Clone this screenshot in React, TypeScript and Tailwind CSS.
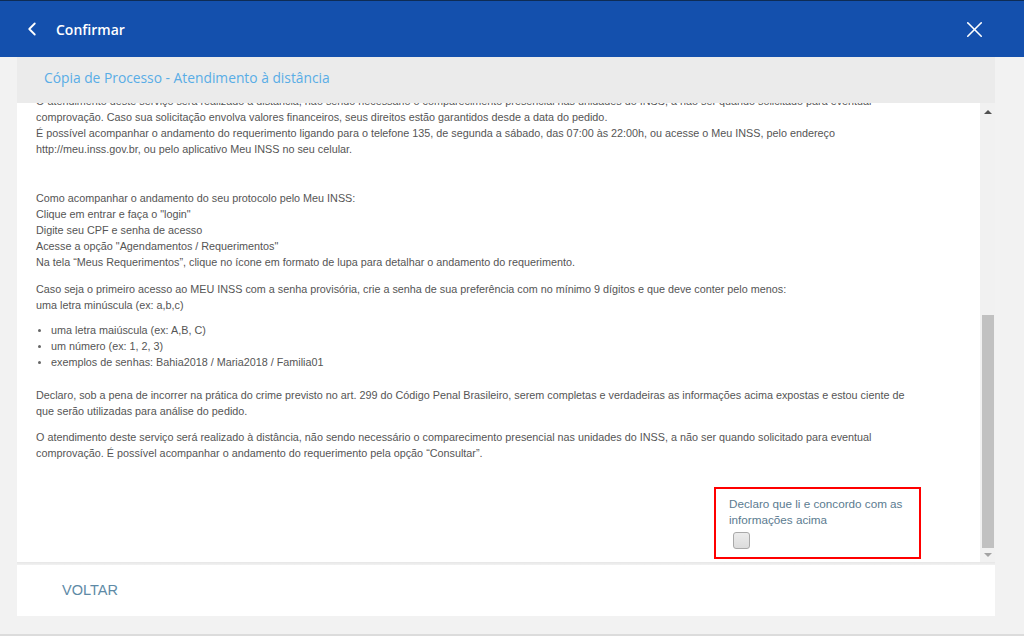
import { ChevronLeft, X } from 'lucide-react';

const body = '"Liberation Sans", Arial, sans-serif';
const open = '"Open Sans", "Noto Sans", sans-serif';

function Bullet({ children }: { children: string }) {
  return (
    <div className="flex items-center">
      <span className="ml-[2px] mr-[10px] h-[3px] w-[3px] rounded-full bg-[#666]" />
      <span>{children}</span>
    </div>
  );
}

function Scrollbar() {
  return (
    <div className="flex w-[15px] flex-col items-center bg-[#f1f1f1]">
      <div className="flex h-[17px] w-full items-center justify-center">
        <span className="h-0 w-0 border-x-[4px] border-b-[4px] border-x-transparent border-b-[#505050]" />
      </div>
      <div className="flex-1" />
      <div className="h-[233px] w-[12px] bg-[#c1c1c1]" />
      <div className="flex h-[14px] w-full items-center justify-center">
        <span className="h-0 w-0 border-x-[4px] border-t-[4px] border-x-transparent border-t-[#a3a3a3]" />
      </div>
    </div>
  );
}

export default function App() {
  return (
    <div className="flex h-[636px] w-[1024px] flex-col overflow-hidden bg-[#f2f2f2]">
      <header
        className="flex h-[57px] shrink-0 items-center border-t border-[#0e2c55] bg-[#1450ad] text-white"
        style={{ fontFamily: open }}
      >
        <ChevronLeft className="ml-[21px] h-[22px] w-[22px]" strokeWidth={2} />
        <span className="ml-[13px] text-[14px] font-semibold">Confirmar</span>
        <X className="ml-auto mr-[36px] h-[27px] w-[27px]" strokeWidth={1.4} />
      </header>

      <div className="ml-[17px] mr-[29px] flex flex-col">
        <div className="flex h-[46px] items-center bg-[#ebebeb] px-[27px] pb-[3px]">
          <span className="text-[13.8px] text-[#59ade6]" style={{ fontFamily: open }}>
            Cópia de Processo - Atendimento à distância
          </span>
        </div>

        <div className="flex h-[459px]">
          <div
            className="flex-1 overflow-hidden bg-white pl-[19px] pr-[50px] text-[10.8px] leading-[16px] text-[#555]"
            style={{ fontFamily: body }}
          >
            <div className="-mt-[10px]">
              <p>
                O atendimento deste serviço será realizado à distância, não sendo necessário o comparecimento presencial nas unidades do INSS, a não ser quando solicitado para eventual comprovação. Caso sua solicitação envolva valores financeiros, seus direitos estão garantidos desde a data do pedido.
                <br />
                É possível acompanhar o andamento do requerimento ligando para o telefone 135, de segunda a sábado, das 07:00 às 22:00h, ou acesse o Meu INSS, pelo endereço http://meu.inss.gov.br, ou pelo aplicativo Meu INSS no seu celular.
              </p>
              <p className="mt-[33px]">
                Como acompanhar o andamento do seu protocolo pelo Meu INSS:
                <br />
                Clique em entrar e faça o "login"
                <br />
                Digite seu CPF e senha de acesso
                <br />
                Acesse a opção "Agendamentos / Requerimentos"
                <br />
                Na tela “Meus Requerimentos”, clique no ícone em formato de lupa para detalhar o andamento do requerimento.
              </p>
              <p className="mt-[11px]">
                Caso seja o primeiro acesso ao MEU INSS com a senha provisória, crie a senha de sua preferência com no mínimo 9 dígitos e que deve conter pelo menos:
                <br />
                uma letra minúscula (ex: a,b,c)
              </p>
              <div className="mt-[9px]">
                <Bullet>uma letra maiúscula (ex: A,B, C)</Bullet>
                <Bullet>um número (ex: 1, 2, 3)</Bullet>
                <Bullet>exemplos de senhas: Bahia2018 / Maria2018 / Familia01</Bullet>
              </div>
              <p className="mt-[17px]">
                Declaro, sob a pena de incorrer na prática do crime previsto no art. 299 do Código Penal Brasileiro, serem completas e verdadeiras as informações acima expostas e estou ciente de
                <br />
                que serão utilizadas para análise do pedido.
              </p>
              <p className="mt-[10px]">
                O atendimento deste serviço será realizado à distância, não sendo necessário o comparecimento presencial nas unidades do INSS, a não ser quando solicitado para eventual comprovação. É possível acompanhar o andamento do requerimento pela opção “Consultar”.
              </p>

              <div className="ml-[678px] mt-[26px] h-[72px] w-[207px] border-2 border-[#ff0000] pl-[13px] pr-[10px] pt-[7px] text-[11.7px] text-[#5b7b90]">
                <p>Declaro que li e concordo com as informações acima</p>
                <div className="ml-[4px] mt-[4px] h-[17px] w-[17px] rounded-[3px] border border-[#a9a9a9] bg-gradient-to-b from-[#ececec] to-[#dcdcdc]" />
              </div>
            </div>
          </div>
          <Scrollbar />
        </div>

        <div className="h-[3px] bg-gradient-to-b from-[#e6e6e6] to-[#f2f2f2]" />
        <div className="flex h-[51px] items-center bg-white pl-[45px]">
          <span className="text-[14.5px] text-[#5e8aa6]" style={{ fontFamily: body }}>
            VOLTAR
          </span>
        </div>
      </div>

      <div className="flex-1" />
      <div className="h-[2px] bg-[#dcdcdc]" />
    </div>
  );
}
